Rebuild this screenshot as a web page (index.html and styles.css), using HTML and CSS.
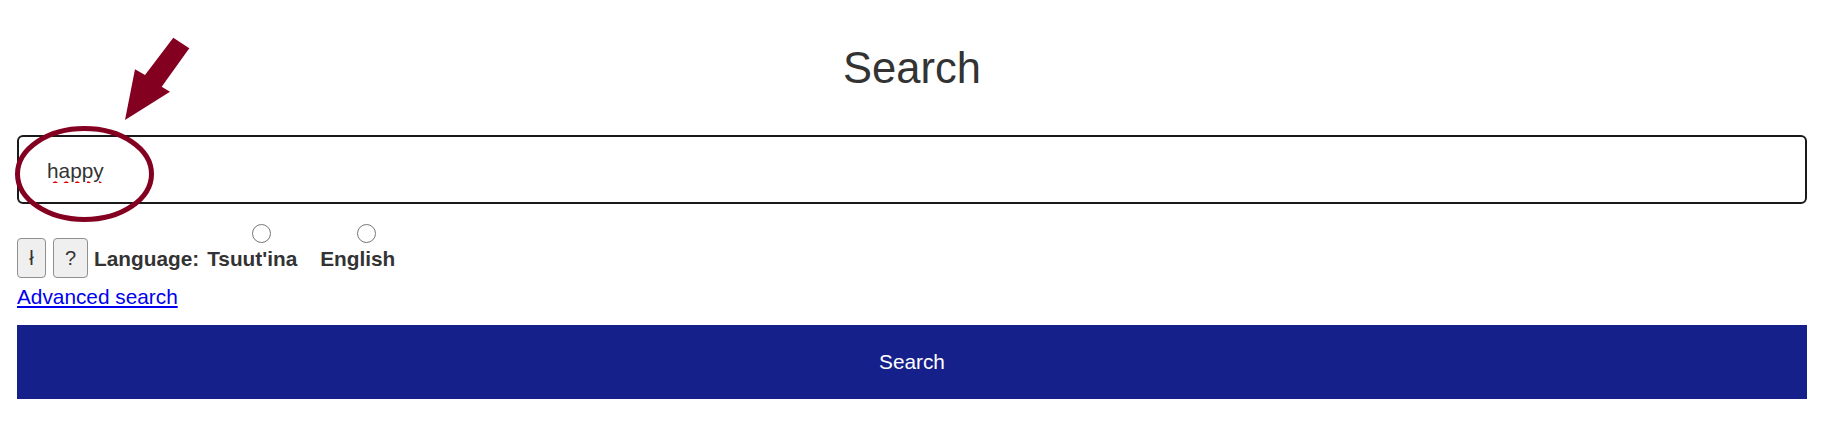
FILE: index.html
```html
<!DOCTYPE html>
<html lang="en">
<head>
<meta charset="utf-8">
<title>Search</title>
<link rel="stylesheet" href="styles.css">
</head>
<body>
<main class="page">
  <h1 class="title">Search</h1>
  <form class="search-form">
    <input class="query" type="text" value="happy" spellcheck="false">
    <div class="controls">
      <button type="button" class="char-btn char-btn--l">ł</button>
      <button type="button" class="char-btn char-btn--q">?</button>
      <span class="lang-label">Language:</span>
      <label class="lang-option">
        <input type="radio" name="lang" class="lang-radio">
        <span class="lang-name">Tsuut'ina</span>
      </label>
      <label class="lang-option lang-option--en">
        <input type="radio" name="lang" class="lang-radio">
        <span class="lang-name">English</span>
      </label>
    </div>
    <a class="advanced" href="#">Advanced search</a>
    <button type="submit" class="submit">Search</button>
  </form>
  <svg class="annotation" width="200" height="230" viewBox="0 0 200 230" aria-hidden="true">
    <polygon points="173.3,37.7 189.3,48.3 161.7,86.7 170,91.7 125,120 135,69.3 145,75" fill="#840021"/>
    <ellipse cx="84.5" cy="174" rx="67" ry="45.5" fill="none" stroke="#840021" stroke-width="5"/>
  </svg>
</main>
</body>
</html>
```

FILE: styles.css
```css
html, body {
  margin: 0;
  padding: 0;
  background: #ffffff;
}

body {
  font-family: "Liberation Sans", Arial, sans-serif;
  color: #333333;
  font-size: 20.8px;
}

.page {
  position: relative;
  padding: 43px 30px 0 17px;
}

.title {
  margin: 0;
  font-size: 43.5px;
  line-height: 50px;
  font-weight: normal;
  text-align: center;
  color: #333333;
}

.search-form {
  display: flex;
  flex-direction: column;
}

.query {
  box-sizing: border-box;
  margin: 42px 0 0;
  height: 69px;
  width: 100%;
  border: 2px solid #1a1a1a;
  border-radius: 6px;
  padding: 3px 10px 0 28px;
  font-family: "Liberation Sans", Arial, sans-serif;
  font-size: 20.8px;
  color: #333333;
  background: #ffffff;
  outline: none;
  text-decoration: underline wavy #e00000;
  text-decoration-thickness: 2px;
  text-underline-offset: 3px;
}

.controls {
  display: flex;
  align-items: flex-end;
  margin-top: 20px;
}

.char-btn {
  box-sizing: border-box;
  height: 40px;
  padding: 0;
  border: 1px solid #8f8f8f;
  border-radius: 4px;
  background: #efefef;
  color: #333333;
  font-family: "Liberation Sans", Arial, sans-serif;
  font-size: 20px;
}

.char-btn--l {
  width: 29px;
  margin-right: 7px;
}

.char-btn--q {
  width: 35px;
  margin-right: 6px;
}

.lang-label,
.lang-name {
  font-weight: bold;
  line-height: 24px;
  color: #333333;
}

.lang-label {
  margin-bottom: 7px;
  margin-right: 8px;
}

.lang-option {
  display: flex;
  flex-direction: column;
  align-items: center;
  margin-bottom: 7px;
}

.lang-option--en {
  margin-left: 23px;
}

.lang-radio {
  width: 19px;
  height: 19px;
  margin: 0 0 4px 18px;
}

.advanced {
  align-self: flex-start;
  margin-top: 7px;
  line-height: 24px;
  color: #0000ee;
  text-decoration: underline;
}

.submit {
  margin-top: 16px;
  height: 74px;
  width: 100%;
  border: none;
  background: #16208a;
  color: #ffffff;
  font-family: "Liberation Sans", Arial, sans-serif;
  font-size: 20.8px;
}

.annotation {
  position: absolute;
  left: 0;
  top: 0;
  pointer-events: none;
}
```
